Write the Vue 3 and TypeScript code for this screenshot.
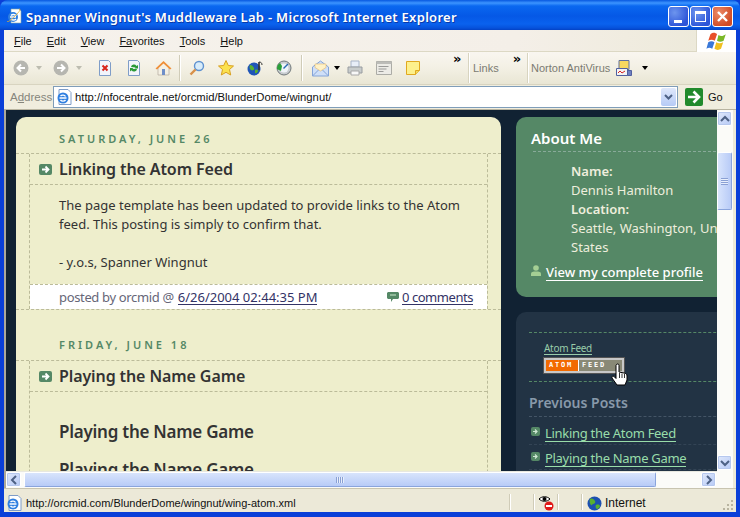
<script setup lang="ts">
const menus = [
  { key: 'F', rest: 'ile' },
  { key: 'E', rest: 'dit' },
  { key: 'V', rest: 'iew' },
  { key: 'Fa', rest: 'vorites' },
  { key: 'T', rest: 'ools' },
  { key: 'H', rest: 'elp' },
]
const recent: string[] = ['Linking the Atom Feed', 'Playing the Name Game']
</script>

<template>
  <div class="win">
    <header class="title">
      <svg class="ie" width="16" height="16" viewBox="0 0 16 16">
        <path d="M5 1h8l2 2v12H5z" fill="#fff" stroke="#8aa" stroke-width=".6" />
        <circle cx="7" cy="9" r="5" fill="#2f7fe0" />
        <path d="M4 9h6M5 7.500a3 2.500 0 0 1 5 .5M5 11a3 2.500 0 0 0 5 0" stroke="#fff" stroke-width="1.500" fill="none" />
        <path d="M1 13c1 2 5-2 9-6s5-6 3-6" stroke="#e8b030" stroke-width=".8" fill="none" />
      </svg>
      <span class="title-text">Spanner Wingnut's Muddleware Lab - Microsoft Internet Explorer</span>
      <div class="caps">
        <div class="cap">
          <span class="min-mark"></span>
        </div>
        <div class="cap">
          <span class="max-mark"></span>
        </div>
        <div class="cap close">
          <svg width="13" height="13" viewBox="0 0 13 13"><path d="M2 2l9 9M11 2l-9 9" stroke="#fff" stroke-width="2.400" /></svg>
        </div>
      </div>
    </header>

    <div class="frame">
      <div class="menubar">
        <nav class="menus">
          <span v-for="m in menus" :key="m.key" class="menu"><u>{{ m.key }}</u>{{ m.rest }}</span>
        </nav>
        <div class="throbber">
          <svg width="22" height="19" viewBox="0 0 28 26">
            <path d="M5 3c4-3 7-2 9 0l-3 9c-3-2-6-2-9 0z" fill="#e8502a" />
            <path d="M16 4c3 2 6 2 10-1l-3 9c-3 2-6 2-9 0z" fill="#7ab828" />
            <path d="M2 14c3-2 6-2 8.500 0l-3 9c-3-2-5-2-8 0z" fill="#3a78d8" />
            <path d="M13 14c3 2 6 2 9.500 0l-3 9c-3 2-6 2-9 0z" fill="#f0c020" />
          </svg>
        </div>
      </div>

      <div class="toolbar">
        <div class="tb-main">
          <div class="nav-group">
            <svg class="ic" width="16" height="16" viewBox="0 0 16 16"><circle cx="8" cy="8" r="7.500" fill="#b6b6b0" /><path d="M12 8H5M8 4.500L4.500 8 8 11.500" stroke="#fff" stroke-width="2" fill="none" /></svg>
            <span class="caret pale"></span>
            <svg class="ic" width="16" height="16" viewBox="0 0 16 16"><circle cx="8" cy="8" r="7.500" fill="#b6b6b0" /><path d="M4 8h7M8 4.500L11.500 8 8 11.500" stroke="#fff" stroke-width="2" fill="none" /></svg>
            <span class="caret pale"></span>
          </div>
          <div class="group first">
            <svg class="ic" width="16" height="16" viewBox="0 0 16 16"><path d="M2.500.5h9l2 2v13h-11z" fill="#f2f4fb" stroke="#7f9dc8" /><path d="M5.500 5.500l5 5M10.500 5.500l-5 5" stroke="#d8241c" stroke-width="2" /></svg>
            <svg class="ic" width="16" height="16" viewBox="0 0 16 16"><path d="M2.500.5h9l2 2v13h-11z" fill="#f2f4fb" stroke="#7f9dc8" /><path d="M5 7a3 3 0 0 1 5.500-1L12 5v3.500H8.500l1-1M11 9a3 3 0 0 1-5.500 1.200L4 11.500V8h3.500l-1 1" fill="#2a9a38" /></svg>
            <svg class="ic" width="17" height="16" viewBox="0 0 17 16"><path d="M3 8v7h11V8" fill="#f4f0e4" stroke="#a8a090" stroke-width=".6" /><path d="M8.500 1L.5 8.500l1.500 1 6.500-6 6.500 6 1.500-1z" fill="#ef8f38" /><path d="M7 9h3v6H7z" fill="#6f8fc8" /></svg>
          </div>
          <i class="sep sep-a"></i>
          <div class="group">
            <svg class="ic" width="16" height="16" viewBox="0 0 16 16"><circle cx="10" cy="6" r="4.500" fill="#d8ecfa" stroke="#5f92d0" stroke-width="1.400" /><path d="M6.500 9.500L1.500 14.500" stroke="#d89048" stroke-width="2.400" /></svg>
            <svg class="ic" width="16" height="16" viewBox="0 0 16 16"><path d="M8 .5l2.300 5 5.200.5-4 3.500 1.200 5.500L8 12.300 3.300 15l1.200-5.500-4-3.500 5.200-.5z" fill="#fbe14e" stroke="#d8a020" /></svg>
            <svg class="ic" width="16" height="16" viewBox="0 0 16 16"><circle cx="7" cy="9" r="6.500" fill="#1f55b8" /><path d="M3 5c2 0 3 1 4 3s-2 3-3 2-2-2-1-5zM8 10c2-1 3 0 3 1s-2 3-3 2z" fill="#58b030" /><path d="M12 2v8" stroke="#333" stroke-width="1.600" /><path d="M12 2c2 0 3 1 3 3" stroke="#333" fill="none" /></svg>
            <svg class="ic" width="16" height="16" viewBox="0 0 16 16"><circle cx="8" cy="8" r="7" fill="#c8ccd0" stroke="#70787a" /><circle cx="8" cy="8" r="4.500" fill="#f0f4f8" /><path d="M12 4L7.500 8.500" stroke="#2a6ab0" stroke-width="1.400" /><path d="M1 9a7 7 0 0 1 3-6l2 3-1 5z" fill="#2aa038" /></svg>
          </div>
          <i class="sep"></i>
          <div class="mail-group">
            <svg class="ic mail" width="17" height="17" viewBox="0 0 17 17"><path d="M.5 7l8-6 8 6v9H.5z" fill="#cfdff8" stroke="#84a4d8" /><path d="M3 7.500V4h11v3.500L8.500 11z" fill="#fff2c8" stroke="#e8b868" stroke-width=".6" /><path d="M.5 16l6-6M16.500 16l-6-6" stroke="#84a4d8" /></svg>
            <span class="caret"></span>
          </div>
          <div class="group">
            <svg class="ic" width="16" height="16" viewBox="0 0 16 16"><path d="M4 1h8v6H4z" fill="#e8eef8" stroke="#a8b4c8" /><path d="M1 7h14v6H1z" fill="#c8cccc" stroke="#989ca0" /><path d="M4 11h8v4H4z" fill="#f8f8f8" stroke="#a8a8a8" /></svg>
            <svg class="ic" width="16" height="16" viewBox="0 0 16 16"><path d="M.5 1.500h15v13H.5z" fill="#ecebe6" stroke="#acaca6" /><path d="M.5 1.500h15V4H.5z" fill="#bcbcb8" /><path d="M2.500 6.500h10M2.500 9h8M2.500 11.500h5" stroke="#9a9a98" /></svg>
            <svg class="ic" width="16" height="16" viewBox="0 0 16 16"><path d="M1.500 1.500h13v9l-4 4h-9z" fill="#fdf08c" stroke="#e0a820" /><path d="M10.500 14.500v-4h4" fill="#f0d860" stroke="#e0a820" /></svg>
          </div>
          <span class="chev chev-a">»</span>
        </div>
        <i class="sep2"></i>
        <div class="tb-links">
          <span class="tb-label">Links</span>
          <span class="chev">»</span>
        </div>
        <i class="sep2"></i>
        <div class="tb-norton">
          <span class="tb-label">Norton AntiVirus</span>
          <svg class="ic" width="16" height="16" viewBox="0 0 16 16"><path d="M3 .5h10v9H3z" fill="#f8d860" stroke="#6070a0" /><path d="M.5 8.500h11v7H.5z" fill="#f4f4f4" stroke="#5060a0" /><path d="M2 13l2-2 2 2 3-2" stroke="#d82020" fill="none" /><path d="M11.500 10.500h4v5h-4z" fill="#7080c0" stroke="#5060a0" /></svg>
          <span class="caret"></span>
        </div>
      </div>

      <div class="addressbar">
        <span class="addr-label">A<u>d</u>dress</span>
        <div class="addr-input">
          <svg width="16" height="16" viewBox="0 0 16 16">
            <path d="M3 .5h9l3 3v12H3z" fill="#fff" stroke="#7f9dc8" />
            <circle cx="7" cy="9" r="5.500" fill="#2f7fe0" />
            <path d="M3.500 9h7M4.500 7a3 2.500 0 0 1 5 .5M4.500 11a3 2.500 0 0 0 5 0" stroke="#fff" stroke-width="1.400" fill="none" />
          </svg>
          <span class="url">http://nfocentrale.net/orcmid/BlunderDome/wingnut/</span>
          <div class="addr-drop">
            <svg width="9" height="6" viewBox="0 0 9 6"><path d="M1 1l3.500 3.500L8 1" stroke="#4d6185" stroke-width="2" fill="none" /></svg>
          </div>
        </div>
        <div class="go">
          <svg width="18" height="18" viewBox="0 0 18 18"><rect width="18" height="18" rx="2" fill="#218a2c" /><path d="M3 9h9M8.500 3.500L14 9l-5.500 5.500" stroke="#fff" stroke-width="2.600" fill="none" /></svg>
          <span>Go</span>
        </div>
      </div>

      <div class="content-row">
        <div class="content-col">
          <div class="viewport">
            <main class="page">
              <section class="panel">
                <h2 class="date first-date">SATURDAY, JUNE 26</h2>
                <article class="post">
                  <h3 class="post-title">
                    <svg class="post-ic" width="13" height="11" viewBox="0 0 13 11"><rect width="13" height="11" rx="2" fill="#558866" /><path d="M3 5.500h6M6.500 2.500l3 3-3 3" stroke="#fff" stroke-width="1.800" fill="none" /></svg>
                    Linking the Atom Feed
                  </h3>
                  <div class="post-body">
                    The page template has been updated to provide links to the Atom<br />
                    feed. This posting is simply to confirm that.<br /><br />
                    - y.o.s, Spanner Wingnut
                  </div>
                  <footer class="post-foot">
                    <span class="by"><span class="by-text">posted by orcmid @ </span><a class="foot-link">6/26/2004 02:44:35 PM</a></span>
                    <span class="comments">
                      <svg width="12" height="10" viewBox="0 0 12 10"><path d="M0 1l1-1h10l1 1v5l-1 1H6L4 10V7H1L0 6z" fill="#558866" /><path d="M3 3h6" stroke="#cdeccd" /></svg>
                      <a class="foot-link tight">0 comments</a>
                    </span>
                  </footer>
                </article>
                <h2 class="date">FRIDAY, JUNE 18</h2>
                <article class="post">
                  <h3 class="post-title">
                    <svg class="post-ic" width="13" height="11" viewBox="0 0 13 11"><rect width="13" height="11" rx="2" fill="#558866" /><path d="M3 5.500h6M6.500 2.500l3 3-3 3" stroke="#fff" stroke-width="1.800" fill="none" /></svg>
                    Playing the Name Game
                  </h3>
                  <div class="post-body second">
                    <h1 class="big">Playing the Name Game</h1>
                    <h1 class="big">Playing the Name Game</h1>
                  </div>
                </article>
              </section>

              <aside class="side">
                <section class="about">
                  <h2 class="about-title">About Me</h2>
                  <dl class="about-info">
                    <dt>Name:</dt>
                    <dd>Dennis Hamilton</dd>
                    <dt>Location:</dt>
                    <dd>Seattle, Washington, United States</dd>
                  </dl>
                  <div class="profile">
                    <svg width="10" height="11" viewBox="0 0 10 11"><circle cx="5" cy="3" r="2.800" fill="#a5cf94" /><path d="M0 11V8.500C0 7 2 6.500 5 6.500s5 .5 5 2V11z" fill="#a5cf94" /></svg>
                    <a class="profile-link">View my complete profile</a>
                  </div>
                </section>
                <section class="links-card">
                  <div class="atom-block">
                    <a class="atom-link">Atom Feed</a>
                    <div class="badge"><span class="b-atom">ATOM</span><span class="b-feed">FEED</span></div>
                  </div>
                  <h2 class="prev-title">Previous Posts</h2>
                  <ul class="prev">
                    <li v-for="r in recent" :key="r">
                      <svg width="9" height="9" viewBox="0 0 9 9"><rect width="9" height="9" rx="2" fill="#558866" /><path d="M2 4.500h4M4 2.500l2 2-2 2" stroke="#cfe8d4" stroke-width="1.200" fill="none" /></svg>
                      <a>{{ r }}</a>
                    </li>
                  </ul>
                  <svg class="hand" width="17" height="23" viewBox="0 0 17 23">
                    <path d="M5.500 1.500c1-1 2.500-.5 2.500 1V9l5 1c2 .5 3 1 3 3v4l-2 5H6l-5-7c-.8-1.500 1-2.500 2-1.500l2 2V2.500z" fill="#fff" stroke="#000" stroke-linejoin="round" />
                    <path d="M8.500 10v5M11 10.500V15M13.500 11v4" stroke="#000" stroke-width=".8" />
                  </svg>
                </section>
              </aside>
            </main>
          </div>
          <div class="hscroll">
            <div class="sb-btn">
              <svg width="8" height="10" viewBox="0 0 8 10"><path d="M6 1L2 5l4 4" stroke="#4d6185" stroke-width="2" fill="none" /></svg>
            </div>
            <div class="h-thumb"><i class="grip-h"></i></div>
            <div class="sb-btn">
              <svg width="8" height="10" viewBox="0 0 8 10"><path d="M2 1l4 4-4 4" stroke="#4d6185" stroke-width="2" fill="none" /></svg>
            </div>
          </div>
        </div>
        <div class="vscroll">
          <div class="sb-btn">
            <svg width="10" height="8" viewBox="0 0 10 8"><path d="M1 6l4-4 4 4" stroke="#4d6185" stroke-width="2" fill="none" /></svg>
          </div>
          <div class="v-thumb"><i class="grip-v"></i></div>
          <div class="sb-btn v-down">
            <svg width="10" height="8" viewBox="0 0 10 8"><path d="M1 2l4 4 4-4" stroke="#4d6185" stroke-width="2" fill="none" /></svg>
          </div>
        </div>
      </div>

      <div class="status">
        <svg class="st-ie" width="16" height="16" viewBox="0 0 16 16">
          <path d="M3 .5h9l3 3v12H3z" fill="#fff" stroke="#7f9dc8" />
          <circle cx="7" cy="9" r="5.500" fill="#2f7fe0" />
          <path d="M3.500 9h7M4.500 7a3 2.500 0 0 1 5 .5M4.500 11a3 2.500 0 0 0 5 0" stroke="#fff" stroke-width="1.400" fill="none" />
        </svg>
        <span class="st-text">http://orcmid.com/BlunderDome/wingnut/wing-atom.xml</span>
        <i class="st-sep"></i>
        <i class="st-sep s2"></i>
        <svg class="eye" width="16" height="16" viewBox="0 0 16 16">
          <path d="M1 4c3-3 8-3 11 0-3 3-8 3-11 0z" fill="#fff" stroke="#000" />
          <circle cx="6.500" cy="4" r="2" fill="#000" />
          <circle cx="11" cy="11" r="4.500" fill="#e01818" />
          <path d="M8 11h6" stroke="#fff" stroke-width="2" />
        </svg>
        <i class="st-sep s3"></i>
        <i class="st-sep s4"></i>
        <svg class="globe" width="15" height="15" viewBox="0 0 15 15">
          <circle cx="7.500" cy="7.500" r="7" fill="#1c50b0" />
          <path d="M3 3c2-1 4 0 5 2s-1 3-2 3-1 2-2 1-2-4-1-6zM9 9c2-1 4 0 4 1s-2 3-3 3-2-3-1-4z" fill="#58b030" />
        </svg>
        <span class="zone">Internet</span>
        <svg class="resize" width="12" height="12" viewBox="0 0 12 12">
          <path d="M9 1h2v2H9zM5 5h2v2H5zM9 5h2v2H9zM1 9h2v2H1zM5 9h2v2H5zM9 9h2v2H9z" fill="#b8b4a0" />
        </svg>
      </div>
    </div>
  </div>
</template>

<style>
html, body { margin: 0; background: #0a4fdc; }
</style>

<style scoped>
.win {
  width: 740px;
  height: 517px;
  overflow: hidden;
  display: flex;
  flex-direction: column;
  background: #0a3fd8;
  font-family: "Liberation Sans", "DejaVu Sans", sans-serif;
  color: #000;
}
.title {
  height: 30px;
  flex: none;
  display: flex;
  align-items: center;
  padding: 0 4px 0 6px;
  border-radius: 8px 8px 0 0;
  background: linear-gradient(180deg, #0758e0 0, #3c95ff 3px, #0a68f0 6px, #0558e6 16px, #0a62ee 24px, #0652dc 28px, #0342c4 30px);
}
.ie { margin-right: 4px; margin-top: 1px; }
.title-text {
  flex: 1;
  color: #fff;
  font: 600 13px "Noto Sans", sans-serif;
  letter-spacing: .3px;
  white-space: nowrap;
  text-shadow: 1px 1px 0 #0a3aa8;
  margin-top: 3px;
}
.caps { display: flex; gap: 1px; margin-right: 3px; margin-top: 2px; }
.cap {
  width: 21px;
  height: 21px;
  box-sizing: border-box;
  border: 1px solid #fff;
  border-radius: 3px;
  background: radial-gradient(circle at 30% 30%, #6d95ee, #2d55d8 75%);
  display: flex;
  align-items: center;
  justify-content: center;
  position: relative;
}
.close { background: radial-gradient(circle at 30% 30%, #ec8a68, #d04b24 75%); }
.min-mark { width: 8px; height: 3px; background: #fff; position: absolute; left: 5px; bottom: 3px; }
.max-mark { width: 9px; height: 7px; border: 1px solid #fff; border-top-width: 3px; }

.frame {
  flex: 1;
  min-height: 0;
  margin: 0 4px 5px 4px;
  display: flex;
  flex-direction: column;
  background: #ece9d8;
}
.menubar {
  height: 22px;
  flex: none;
  display: flex;
  box-sizing: border-box;
  background: linear-gradient(90deg, #f6f2ec, #f4efe8 70%, #ece9d8);
  border-bottom: 1px solid #dcd8c4;
}
.menus { flex: 1; display: flex; align-items: center; padding-left: 10px; gap: 15px; font-size: 11px; }
.menu { color: #111; }
.throbber {
  width: 39px;
  height: 22px;
  background: #fff;
  border-left: 1px solid #dcd8c4;
  display: flex;
  justify-content: center;
  align-items: center;
  overflow: hidden;
}
.toolbar {
  height: 33px;
  flex: none;
  display: flex;
  align-items: center;
  background: linear-gradient(180deg, #f9f6f0, #f3f0e4 50%, #e9e6d4);
  border-bottom: 1px solid #d8d4c0;
  box-sizing: border-box;
}
.ic { display: block; flex: none; }
.tb-main { width: 464px; height: 100%; display: flex; align-items: center; padding-left: 9px; box-sizing: border-box; position: relative; }
.nav-group { display: flex; align-items: center; }
.nav-group .caret { margin: 0 11px 0 7px; }
.nav-group .caret:last-child { margin-right: 15px; }
.group { display: flex; gap: 13px; align-items: center; }
.caret { width: 0; height: 0; border: 3px solid transparent; border-top: 4px solid #000; border-bottom: 0; display: block; }
.caret.pale { border-top-color: #bdbcb0; }
.sep { width: 1px; height: 26px; background: #d0ccb8; box-shadow: 1px 0 0 #fff; margin: 0 9px; }
.sep-a { margin-left: 7px; }
.mail-group { display: flex; align-items: center; gap: 5px; margin: 0 7px 0 1px; }
.chev { font: 700 13px/1 "DejaVu Sans", sans-serif; color: #000; align-self: flex-start; margin-top: 0; }
.chev-a { position: absolute; left: 449px; top: 0; }
.sep2 { width: 1px; height: 30px; background: #d8d4c0; box-shadow: 1px 0 0 #fff; }
.tb-label { font-size: 11px; color: #7b7b72; white-space: nowrap; }
.tb-links { width: 58px; display: flex; gap: 14px; padding-left: 4px; align-items: center; box-sizing: border-box; height: 100%; }
.tb-norton { display: flex; align-items: center; padding-left: 3px; gap: 6px; }
.tb-norton .caret { margin-left: 4px; }

.addressbar {
  height: 24px;
  flex: none;
  display: flex;
  align-items: center;
  background: #f0edde;
  box-sizing: border-box;
}
.addr-label { width: 49px; padding-left: 6px; box-sizing: border-box; font-size: 11.500px; color: #85857c; }
.addr-input {
  width: 625px;
  height: 22px;
  box-sizing: border-box;
  background: #fff;
  border: 1px solid #7f9db9;
  display: flex;
  align-items: center;
  padding-left: 2px;
}
.url { flex: 1; margin-left: 3px; font-size: 11.250px; color: #111; }
.addr-drop {
  width: 15px;
  height: 18px;
  margin-right: 1px;
  border-radius: 2px;
  background: linear-gradient(180deg, #dfe8fb, #b6cbf6);
  display: flex;
  align-items: center;
  justify-content: center;
}
.go { display: flex; align-items: center; gap: 5px; margin-left: 7px; font-size: 11px; color: #111; }

.content-row {
  flex: 1;
  min-height: 0;
  display: flex;
  border-top: 1px solid #b8b4a0;
  border-left: 2px solid #aca899;
}
.content-col { flex: 1; min-width: 0; display: flex; flex-direction: column; }
.viewport { height: 361px; overflow: hidden; background: #112233; }
.page {
  width: 760px;
  display: flex;
  gap: 15px;
  padding: 7px 0 0 10px;
  box-sizing: border-box;
  font-family: "Noto Sans", sans-serif;
  font-size: 13px;
}
.panel {
  width: 485px;
  flex: none;
  background: #eeeecc;
  border-radius: 10px 10px 0 0;
  color: #333;
}
.date {
  margin: 0;
  height: 37px;
  padding: 6px 0 0 43px;
  display: flex;
  align-items: center;
  box-sizing: border-box;
  border-bottom: 1px dashed #bbbb99;
  font-size: 11px;
  font-weight: 600;
  letter-spacing: 3px;
  color: #558866;
}
.date:not(.first-date) { height: 52px; padding-top: 19px; }
.post {
  margin: 0 13px;
  border-left: 1px dashed #bbbb99;
  border-right: 1px dashed #bbbb99;
}
.post-title {
  margin: 0;
  height: 31px;
  box-sizing: border-box;
  display: flex;
  align-items: center;
  gap: 7px;
  padding-left: 9px;
  border-bottom: 1px dashed #bbbb99;
  font-size: 16px;
  font-weight: 600;
  letter-spacing: -.1px;
  color: #333;
}
.post-ic { flex: none; }
.post-body {
  padding: 11px 0 11px 29px;
  line-height: 19px;
  height: 99px;
  box-sizing: border-box;
  color: #333;
}
.post-body.second { height: auto; padding-top: 28px; }
.big { margin: 0 0 15px; font-size: 17px; line-height: 23px; font-weight: 600; letter-spacing: -.25px; color: #333; }
.post-foot {
  height: 25px;
  box-sizing: border-box;
  padding: 0 14px 0 29px;
  background: #fff;
  border-top: 1px dashed #bbbb99;
  display: flex;
  justify-content: space-between;
  align-items: center;
  color: #666677;
  position: relative;
}
.post-foot::after {
  content: "";
  position: absolute;
  left: -14px;
  right: -14px;
  bottom: -1px;
  border-bottom: 1px dashed #bbbb99;
}
.by-text { letter-spacing: -.35px; margin-right: 1px; }
.foot-link { color: #333366; border-bottom: 1px solid #333366; line-height: 14px; display: inline-block; }
.tight { letter-spacing: -.45px; }
.comments { display: inline-flex; align-items: center; gap: 3px; }

.side { width: 250px; flex: none; display: flex; flex-direction: column; gap: 15px; }
.about {
  height: 180px;
  box-sizing: border-box;
  background: #558866;
  border-radius: 10px;
  padding: 11px 0 0 15px;
  color: #eeeedd;
}
.about-title {
  margin: 0 0 0 2px;
  padding: 0 0 2px;
  font-size: 15px;
  line-height: 21px;
  font-weight: 600;
  color: #fff;
  border-bottom: 1px dashed #88aa99;
  text-indent: -2px;
}
.about-info { margin: 10px 0 0 40px; line-height: 19px; width: 190px; }
.about-info dt { font-weight: 600; }
.about-info dd { margin: 0; }
.profile { display: flex; align-items: center; gap: 5px; margin-top: 7px; }
.profile svg { margin-top: -5px; }
.profile-link { color: #fff; font-weight: 500; border-bottom: 1px solid #fff; line-height: 16px; }
.links-card {
  height: 300px;
  box-sizing: border-box;
  background: #223344;
  border-radius: 10px 10px 0 0;
  padding: 20px 0 0 13px;
  position: relative;
}
.atom-block {
  border-top: 1px dashed #558866;
  border-bottom: 1px dashed #558866;
  height: 50px;
  box-sizing: border-box;
  padding: 9px 0 0 15px;
}
.atom-link {
  display: table;
  font-size: 10px;
  line-height: 12px;
  letter-spacing: -.3px;
  color: #99ccaa;
  border-bottom: 1px solid #99ccaa;
}
.badge {
  margin-top: 3px;
  width: 76px;
  height: 11px;
  border: 2px solid #c8c8c8;
  display: flex;
  font: 700 7px/11px "DejaVu Sans Mono", monospace;
  letter-spacing: 1.800px;
  color: #fff;
  outline: 1px solid #555;
}
.b-atom { width: 33px; background: #f26a00; padding-left: 3px; box-sizing: border-box; border-right: 1px solid #fff; }
.b-feed { flex: 1; background: #898976; padding-left: 3px; }
.prev-title {
  margin: 10px 0 0;
  padding-bottom: 2px;
  font-size: 14px;
  line-height: 22px;
  font-weight: 600;
  color: #8899aa;
  border-bottom: 1px dashed #445566;
}
.prev { list-style: none; margin: 0; padding: 0; }
.prev li {
  height: 25px;
  display: flex;
  align-items: center;
  gap: 5px;
  padding: 3px 0 0 2px;
  box-sizing: border-box;
  border-bottom: 1px dashed #334455;
  font-size: 13px;
  letter-spacing: -.3px;
}
.prev li:first-child { height: 28px; padding-top: 6px; }
.prev li svg { margin-top: -5px; }
.prev a { color: #99ddaa; border-bottom: 1px solid #99ddaa; line-height: 16px; }
.hand { position: absolute; left: 95px; top: 51px; }

.hscroll {
  height: 17px;
  flex: none;
  display: flex;
  background: #fbfbf8;
  border-top: 1px solid #e8e8e0;
  box-sizing: border-box;
}
.sb-btn {
  width: 15px;
  height: 15px;
  flex: none;
  box-sizing: border-box;
  border: 1px solid #fff;
  border-radius: 2px;
  background: linear-gradient(135deg, #dfe8fb, #b7caf6);
  box-shadow: 0 0 0 1px #b6c8ee inset;
  display: flex;
  align-items: center;
  justify-content: center;
}
.hscroll .sb-btn:last-child { margin-left: auto; margin-right: 1px; }
.h-thumb {
  width: 632px;
  margin-left: 3px;
  height: 15px;
  border-radius: 2px;
  background: linear-gradient(180deg, #d8e4fc, #b8cbf7);
  border: 1px solid #fff;
  border-right-color: #8aa4dc;
  border-bottom-color: #8aa4dc;
  box-sizing: border-box;
  display: flex;
  justify-content: center;
  align-items: center;
}
.grip-h {
  width: 8px;
  height: 6px;
  background: repeating-linear-gradient(90deg, #8aa0d4 0 1px, #e8effc 1px 2px);
}
.vscroll {
  width: 19px;
  flex: none;
  padding: 1px 0 0 0;
  box-sizing: border-box;
  background: #fbfbf8;
  border-right: 3px solid #ece9d8;
  display: flex;
  flex-direction: column;
}
.vscroll .sb-btn { width: 15px; }
.v-thumb {
  width: 15px;
  height: 58px;
  margin-top: 26px;
  box-sizing: border-box;
  border: 1px solid #fff;
  border-bottom-color: #8aa4dc;
  border-right-color: #8aa4dc;
  border-radius: 2px;
  background: linear-gradient(90deg, #d8e4fc, #b8cbf7);
  display: flex;
  justify-content: center;
  align-items: center;
}
.grip-v {
  width: 7px;
  height: 7px;
  background: repeating-linear-gradient(180deg, #8aa0d4 0 1px, #e8effc 1px 2px);
}
.v-down { margin-top: 245px; }

.status {
  height: 24px;
  flex: none;
  display: flex;
  align-items: center;
  position: relative;
  background: #ece9d8;
  border-top: 1px solid #c8c4b0;
  box-sizing: border-box;
  padding: 4px 0 0 2px;
  color: #111;
}
.st-text { margin-left: 4px; font-size: 11px; }
.st-sep { position: absolute; left: 505px; top: 5px; bottom: 2px; width: 1px; background: #d0ccb8; box-shadow: 1px 0 0 #fff; }
.s2 { left: 529px; }
.s3 { left: 553px; }
.s4 { left: 577px; }
.eye { position: absolute; left: 534px; top: 6px; }
.globe { position: absolute; left: 583px; top: 7px; }
.zone { position: absolute; left: 601px; top: 7px; font-size: 12px; }
.resize { position: absolute; right: 2px; bottom: 1px; }
</style>
